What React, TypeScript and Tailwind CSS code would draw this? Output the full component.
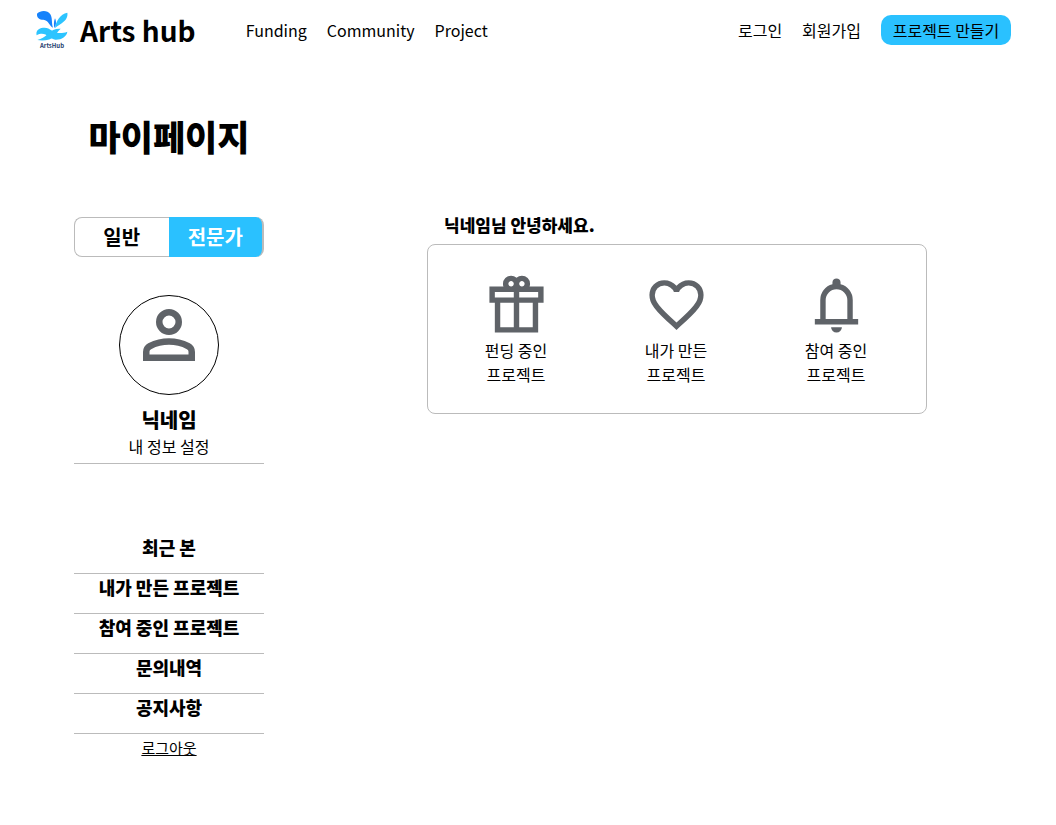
const person =
  "M480-480q-66 0-113-47t-47-113q0-66 47-113t113-47q66 0 113 47t47 113q0 66-47 113t-113 47ZM160-160v-112q0-34 17.5-62.5T224-378q62-31 126-46.5T480-440q66 0 130 15.5T736-378q29 15 46.5 43.5T800-272v112H160Zm80-80h480v-32q0-11-5.5-20T700-306q-54-27-109-40.5T480-360q-56 0-111 13.5T260-306q-9 5-14.5 14t-5.5 20v32Zm240-320q33 0 56.5-23.5T560-640q0-33-23.5-56.5T480-720q-33 0-56.5 23.5T400-640q0 33 23.5 56.5T480-560Z";
const gift =
  "M160-80v-440H80v-240h208q-5-9-6.5-19t-1.5-21q0-50 35-85t85-35q23 0 43 8.5t37 23.5q17-16 37-24t43-8q50 0 85 35t35 85q0 11-2 20.5t-6 19.5h208v240h-80v440H160Zm400-760q-17 0-28.5 11.5T520-800q0 17 11.5 28.5T560-760q17 0 28.5-11.5T600-800q0-17-11.5-28.5T560-840Zm-200 40q0 17 11.5 28.5T400-760q17 0 28.5-11.5T440-800q0-17-11.5-28.5T400-840q-17 0-28.5 11.5T360-800ZM160-680v80h280v-80H160Zm280 520v-360H240v360h200Zm80 0h200v-360H520v360Zm280-440v-80H520v80h280Z";
const heart =
  "m480-120-58-52q-101-91-167-157T150-447.5Q111-500 95.5-544T80-634q0-94 63-157t157-63q52 0 99 22t81 62q34-40 81-62t99-22q94 0 157 63t63 157q0 46-15.5 90T810-447.5Q771-395 705-329T538-172l-58 52Zm0-108q96-86 158-147.5t98-107q36-45.5 50-81t14-70.5q0-60-40-100t-100-40q-47 0-87 26.5T518-680h-76q-15-41-55-67.5T300-774q-60 0-100 40t-40 100q0 35 14 70.5t50 81q36 45.5 98 107T480-228Zm0-273Z";
const bell =
  "M160-200v-80h80v-280q0-83 50-147.5T420-792v-28q0-25 17.5-42.5T480-880q25 0 42.5 17.5T540-820v28q80 20 130 84.5T720-560v280h80v80H160Zm320-300Zm0 420q-33 0-56.5-23.5T400-160h160q0 33-23.5 56.5T480-80ZM320-280h320v-280q0-66-47-113t-113-47q-66 0-113 47t-47 113v280Z";

function Icon({ d, className }: { d: string; className: string }) {
  return (
    <svg viewBox="0 -960 960 960" fill="#5f6368" className={className} aria-hidden="true">
      <path d={d} />
    </svg>
  );
}

function Logo() {
  return (
    <div className="flex w-8 flex-col items-center">
      <svg viewBox="0 -3 96 96" className="size-8" aria-hidden="true">
        <path d="M3 8C14-2 34-3 43 10C50 21 46 36 51 50C41 46 38 27 22 26C10 26 2 20 3 8Z" fill="#1682fb" />
        <path d="M94 5C97 22 84 33 74 39C66 44 60 48 57 52C60 30 72 10 94 5Z" fill="#2cc4ff" />
        <path d="M57 22C62 32 60 44 55 51C53 42 53 32 57 22Z" fill="#1682fb" />
        <path d="M2 73C-2 58 10 50 26 50C46 50 56 76 94 62C92 76 76 87 58 86C40 84 28 58 2 73Z" fill="#2cc4ff" />
        <path d="M4 87C16 83 26 78 36 68C46 58 58 52 74 53C66 60 62 66 58 74C44 88 22 90 4 87Z" fill="#2cc4ff" />
      </svg>
      <span className="text-[6px] leading-[8px] font-bold text-[#23406e]">ArtsHub</span>
    </div>
  );
}

const nav = ["Funding", "Community", "Project"];
const menu = ["최근 본", "내가 만든 프로젝트", "참여 중인 프로젝트", "문의내역", "공지사항"];
const cards = [
  { icon: gift, top: "펀딩 중인" },
  { icon: heart, top: "내가 만든" },
  { icon: bell, top: "참여 중인" },
];

export default function App() {
  return (
    <div className="min-h-screen bg-white pb-16 font-['Noto_Sans_CJK_KR','Noto_Sans_KR',sans-serif] text-base text-black">
      <header className="flex items-center justify-between pt-[10px] pr-[45px] pl-9">
        <div className="flex items-center">
          <a href="#" className="flex items-center gap-3">
            <Logo />
            <span className="text-[28px] leading-10 font-bold">Arts hub</span>
          </a>
          <nav className="ml-[50px] flex gap-5">
            {nav.map((item) => (
              <a key={item} href="#">{item}</a>
            ))}
          </nav>
        </div>
        <div className="flex items-center gap-5">
          <a href="#">로그인</a>
          <a href="#">회원가입</a>
          <button className="h-[30px] w-[130px] rounded-[10px] bg-[#2ac1ff]">프로젝트 만들기</button>
        </div>
      </header>

      <main className="px-[74px] pt-[60px]">
        <h1 className="w-[190px] text-center text-[35px] leading-[52px] font-black">마이페이지</h1>
        <div className="mt-[55px] flex items-start gap-[163px]">
          <aside className="flex w-[190px] shrink-0 flex-col">
            <div className="flex h-10 text-xl font-bold">
              <button className="flex-1 rounded-l-lg border border-r-0 border-[#bbbbbb]">일반</button>
              <button className="flex-1 rounded-r-lg border-r-2 border-[#bbbbbb] bg-[#2ac1ff] text-white">전문가</button>
            </div>
            <section className="mt-[38px] flex flex-col items-center border-b border-[#bbbbbb] pb-[5px]">
              <div className="flex size-[100px] justify-center rounded-full border border-black">
                <Icon d={person} className="size-[78px]" />
              </div>
              <h2 className="mt-[11px] text-xl leading-7 font-black">닉네임</h2>
              <a href="#">내 정보 설정</a>
            </section>
            <ul className="mt-[70px] text-center text-lg leading-[26px] font-black">
              {menu.map((item) => (
                <li key={item} className="h-10 border-b border-[#bbbbbb]">
                  <a href="#">{item}</a>
                </li>
              ))}
            </ul>
            <a href="#" className="mt-[3px] self-center text-[15px] underline">로그아웃</a>
          </aside>

          <section className="max-w-[500px] flex-1">
            <h2 className="pl-[17px] text-[17px] leading-4 font-black">닉네임님 안녕하세요.</h2>
            <div className="mt-[11px] grid grid-cols-3 rounded-lg border border-[#bbbbbb] pt-7 pr-[10px] pb-[27px] pl-2">
              {cards.map((card) => (
                <a key={card.top} href="#" className="flex flex-col items-center">
                  <Icon d={card.icon} className="size-[65px]" />
                  <span>{card.top}</span>
                  <span>프로젝트</span>
                </a>
              ))}
            </div>
          </section>
        </div>
      </main>
    </div>
  );
}
